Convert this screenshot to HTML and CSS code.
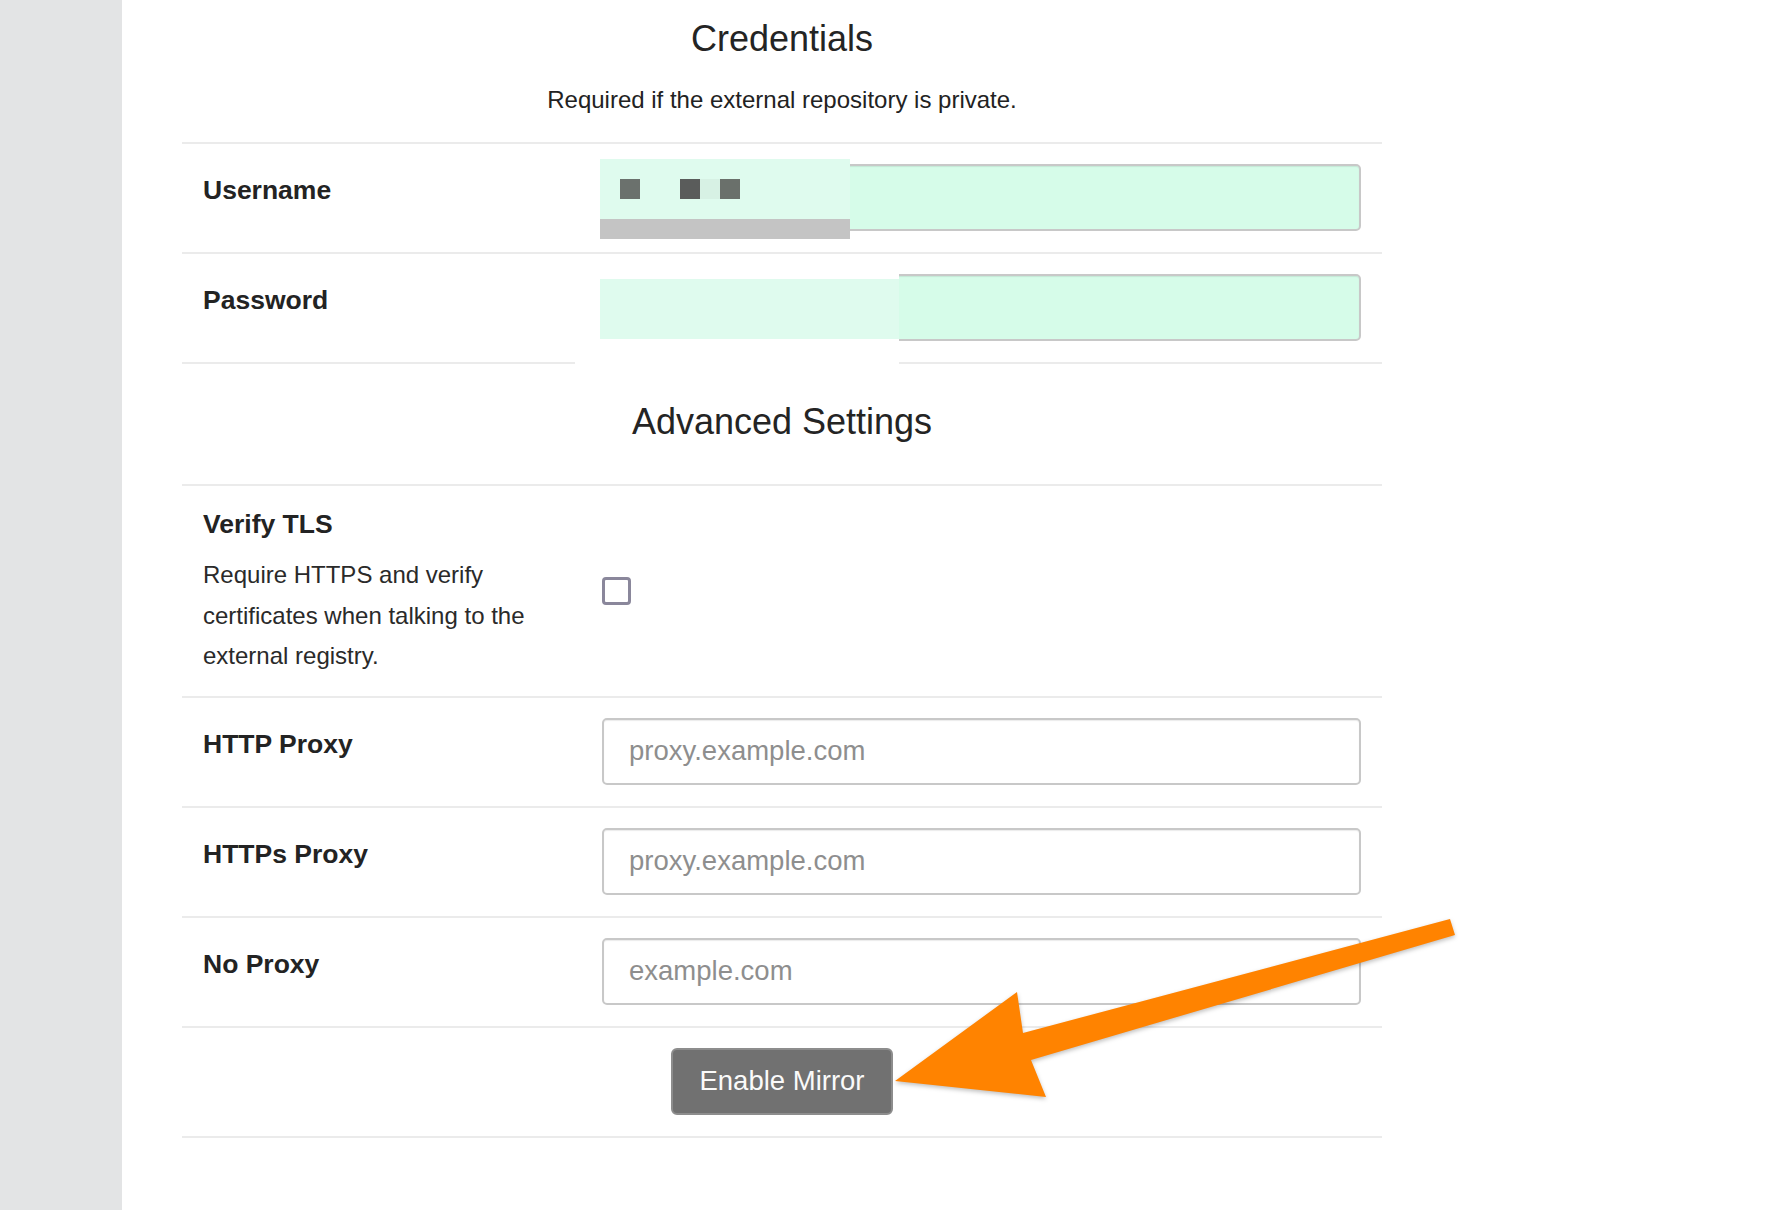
FILE: index.html
```html
<!DOCTYPE html>
<html lang="en">
<head>
<meta charset="utf-8">
<title>Repository Mirror Settings</title>
<link rel="stylesheet" href="styles.css">
</head>
<body>
<div class="page">
  <aside class="sidebar"></aside>
  <main class="main">
    <div class="config">
      <div class="section-head section-head-first">
        <h2 class="section-title">Credentials</h2>
        <p class="section-sub">Required if the external repository is private.</p>
      </div>

      <div class="row">
        <div class="label-cell"><span class="label">Username</span></div>
        <div class="field-cell">
          <input class="field field-filled" type="text" aria-label="Username">
          <div class="autofill-user">
            <div class="autofill-top">
              <span class="dot dot-a"></span>
              <span class="dot dot-b"></span>
              <span class="dot dot-c"></span>
              <span class="dot dot-d"></span>
            </div>
            <div class="autofill-bar"></div>
          </div>
        </div>
      </div>

      <div class="row">
        <div class="label-cell"><span class="label">Password</span></div>
        <div class="field-cell">
          <input class="field field-filled" type="password" aria-label="Password">
          <div class="autofill-pass"><div class="autofill-pass-box"></div></div>
        </div>
      </div>

      <div class="section-head section-head-adv">
        <h2 class="section-title">Advanced Settings</h2>
      </div>

      <div class="row">
        <div class="label-cell label-cell-tall">
          <span class="label">Verify TLS</span>
          <p class="desc">Require HTTPS and verify certificates when talking to the external registry.</p>
        </div>
        <div class="field-cell field-cell-center">
          <span class="checkbox"></span>
        </div>
      </div>

      <div class="row">
        <div class="label-cell"><span class="label">HTTP Proxy</span></div>
        <div class="field-cell">
          <input class="field" type="text" placeholder="proxy.example.com">
        </div>
      </div>

      <div class="row">
        <div class="label-cell"><span class="label">HTTPs Proxy</span></div>
        <div class="field-cell">
          <input class="field" type="text" placeholder="proxy.example.com">
        </div>
      </div>

      <div class="row">
        <div class="label-cell"><span class="label">No Proxy</span></div>
        <div class="field-cell">
          <input class="field" type="text" placeholder="example.com">
        </div>
      </div>

      <div class="row row-button">
        <button class="btn" type="button">Enable Mirror</button>
      </div>
    </div>
  </main>

  <svg class="arrow" width="1786" height="1210" viewBox="0 0 1786 1210" aria-hidden="true">
    <polygon points="895,1081 1017,992 1023,1033 1450,919 1455,935 1031,1060 1046,1097" fill="#ff8300"/>
  </svg>
</div>
</body>
</html>
```

FILE: styles.css
```css
* { box-sizing: border-box; }

html, body {
  margin: 0;
  padding: 0;
  background: #ffffff;
}

body {
  font-family: "Liberation Sans", Arial, sans-serif;
  color: #222222;
}

.page {
  position: relative;
  display: flex;
  width: 1786px;
  height: 1210px;
  overflow: hidden;
}

.sidebar {
  width: 122px;
  flex: 0 0 122px;
  background: #e3e4e5;
}

.main {
  flex: 1;
  padding-left: 60px;
}

.config {
  width: 1200px;
}

.section-head {
  text-align: center;
}

.section-head-first {
  padding: 17px 0 26px;
}

.section-head-adv {
  border-top: 2px solid #ebebeb;
  padding: 36px 0 40px;
}

.section-title {
  margin: 0;
  font-size: 36px;
  line-height: 44px;
  font-weight: 400;
  color: #242424;
}

.section-sub {
  margin: 23px 0 0;
  font-size: 24px;
  line-height: 32px;
  color: #222;
}

.row {
  display: grid;
  grid-template-columns: 399px 1fr;
  border-top: 2px solid #ebebeb;
}

.label-cell {
  padding: 30px 21px 21px;
}

.label-cell-tall {
  padding: 22px 21px 19px;
}

.label {
  display: block;
  font-size: 26.5px;
  line-height: 32px;
  font-weight: 700;
  color: #232323;
}

.desc {
  margin: 15px 0 0;
  font-size: 24px;
  line-height: 40.5px;
  color: #2a2a2a;
}

.field-cell {
  position: relative;
  padding: 20px 21px 21px;
}

.field-cell-center {
  align-self: center;
  padding: 0 21px;
  display: flex;
  align-items: center;
}

.field {
  display: block;
  width: 100%;
  height: 67px;
  padding: 0 25px;
  border: 2px solid #c8c8c8;
  border-radius: 5px;
  box-shadow: inset 0 1px 1px rgba(0, 0, 0, 0.08);
  background: #ffffff;
  font-family: "Liberation Sans", Arial, sans-serif;
  font-size: 27.5px;
  color: #333;
  outline: none;
}

.field::placeholder {
  color: #8e8e8e;
}

.field-filled {
  background: #d6fce9;
}

.checkbox {
  display: block;
  width: 29px;
  height: 28px;
  border: 3px solid #8a879b;
  border-radius: 4px;
  background: #ffffff;
}

.row-button {
  display: flex;
  justify-content: center;
  padding: 20px 0 21px;
  border-bottom: 2px solid #ebebeb;
}

.btn {
  height: 67px;
  padding: 0 26px;
  background: #717171;
  border: 2px solid #8d8d8d;
  border-radius: 6px;
  color: #fafafa;
  font-family: "Liberation Sans", Arial, sans-serif;
  font-size: 27.5px;
}

/* autofill overlays drawn on top of the credential inputs */
.autofill-user {
  position: absolute;
  left: 19px;
  top: 15px;
  width: 250px;
  height: 80px;
}

.autofill-top {
  position: relative;
  height: 60px;
  background: #dffbee;
}

.dot {
  position: absolute;
  top: 20px;
  width: 20px;
  height: 20px;
}

.dot-a { left: 20px; background: #6b716d; }
.dot-b { left: 80px; background: #5a5c5b; }
.dot-c { left: 100px; background: #d7f1e4; }
.dot-d { left: 120px; background: #6a706b; }

.autofill-bar {
  height: 20px;
  background: #c4c4c4;
}

.autofill-pass {
  position: absolute;
  left: -6px;
  top: 15px;
  width: 324px;
  height: 96px;
  background: #ffffff;
}

.autofill-pass-box {
  margin: 10px 0 0 25px;
  width: 299px;
  height: 60px;
  background: #dffbee;
}

.arrow {
  position: absolute;
  left: 0;
  top: 0;
  pointer-events: none;
  filter: drop-shadow(0 2px 2px rgba(0, 0, 0, 0.25));
}
```
